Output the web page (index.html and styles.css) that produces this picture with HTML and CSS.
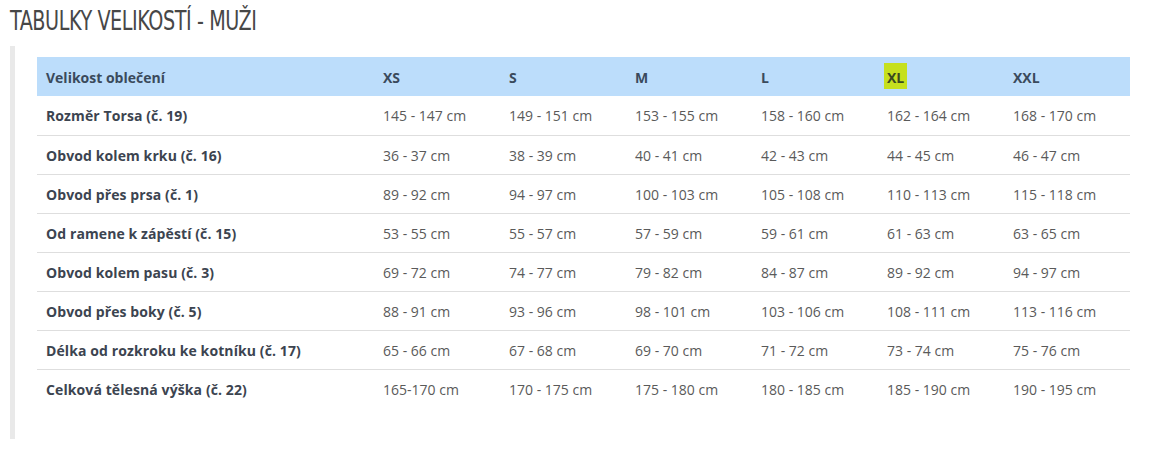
FILE: index.html
```html
<!DOCTYPE html>
<html lang="cs">
<head>
<meta charset="utf-8">
<title>Tabulky velikostí - muži</title>
<link rel="stylesheet" href="styles.css">
</head>
<body>
<h1 class="title"><span class="title-text">TABULKY VELIKOSTÍ - MUŽI</span></h1>
<div class="quote">
  <table class="sizes">
    <thead>
      <tr><th>Velikost oblečení</th><th>XS</th><th>S</th><th>M</th><th>L</th><th><span class="mark">XL</span></th><th>XXL</th></tr>
    </thead>
    <tbody>
      <tr><th>Rozměr Torsa (č. 19)</th><td>145 - 147 cm</td><td>149 - 151 cm</td><td>153 - 155 cm</td><td>158 - 160 cm</td><td>162 - 164 cm</td><td>168 - 170 cm</td></tr>
      <tr><th>Obvod kolem krku (č. 16)</th><td>36 - 37 cm</td><td>38 - 39 cm</td><td>40 - 41 cm</td><td>42 - 43 cm</td><td>44 - 45 cm</td><td>46 - 47 cm</td></tr>
      <tr><th>Obvod přes prsa (č. 1)</th><td>89 - 92 cm</td><td>94 - 97 cm</td><td>100 - 103 cm</td><td>105 - 108 cm</td><td>110 - 113 cm</td><td>115 - 118 cm</td></tr>
      <tr><th>Od ramene k zápěstí (č. 15)</th><td>53 - 55 cm</td><td>55 - 57 cm</td><td>57 - 59 cm</td><td>59 - 61 cm</td><td>61 - 63 cm</td><td>63 - 65 cm</td></tr>
      <tr><th>Obvod kolem pasu (č. 3)</th><td>69 - 72 cm</td><td>74 - 77 cm</td><td>79 - 82 cm</td><td>84 - 87 cm</td><td>89 - 92 cm</td><td>94 - 97 cm</td></tr>
      <tr><th>Obvod přes boky (č. 5)</th><td>88 - 91 cm</td><td>93 - 96 cm</td><td>98 - 101 cm</td><td>103 - 106 cm</td><td>108 - 111 cm</td><td>113 - 116 cm</td></tr>
      <tr><th>Délka od rozkroku ke kotníku (č. 17)</th><td>65 - 66 cm</td><td>67 - 68 cm</td><td>69 - 70 cm</td><td>71 - 72 cm</td><td>73 - 74 cm</td><td>75 - 76 cm</td></tr>
      <tr><th>Celková tělesná výška (č. 22)</th><td>165-170 cm</td><td>170 - 175 cm</td><td>175 - 180 cm</td><td>180 - 185 cm</td><td>185 - 190 cm</td><td>190 - 195 cm</td></tr>
    </tbody>
  </table>
</div>
</body>
</html>
```
FILE: styles.css
```css
html, body {
  margin: 0;
  padding: 0;
  background: #fff;
}
body {
  font-family: "Open Sans", "Noto Sans", sans-serif;
  color: #555;
}
.title {
  margin: 0;
  padding: 7px 0 0 10px;
  height: 38px;
  box-sizing: border-box;
  font-family: "Liberation Sans Narrow", "DejaVu Sans Condensed", "DejaVu Sans", sans-serif;
  font-stretch: condensed;
  font-weight: normal;
  font-size: 26px;
  line-height: 28px;
  color: #474747;
}
.title-text {
  display: inline-block;
  letter-spacing: -0.5px;
  transform: scaleX(0.82);
  transform-origin: left center;
}
.quote {
  margin: 8px 0 0 10px;
  border-left: 5px solid #e9e9e9;
  padding: 11px 20px 31px 22px;
  width: 1093px;
}
.sizes {
  border-collapse: collapse;
  width: 1093px;
  table-layout: fixed;
  font-size: 14px;
}
.sizes th, .sizes td {
  height: 39px;
  padding: 1px 9px 0;
  text-align: left;
  vertical-align: middle;
  box-sizing: border-box;
}
.sizes th:first-child { width: 337px; }
.sizes thead tr { background: #bcddfb; }
.sizes thead th {
  font-weight: 700;
  color: #3a4a5c;
  font-size: 14px;
}
.sizes tbody th {
  font-weight: 700;
  color: #3c4450;
  letter-spacing: 0.1px;
}
.sizes tbody td {
  font-weight: 400;
  color: #5a5a5a;
}
.sizes tbody tr + tr {
  border-top: 1px solid #dedede;
}
.mark {
  background: #c6e01e;
  padding: 5px 3px 2px 3px;
  margin-left: -3px;
  color: #3a4a20;
}
```
